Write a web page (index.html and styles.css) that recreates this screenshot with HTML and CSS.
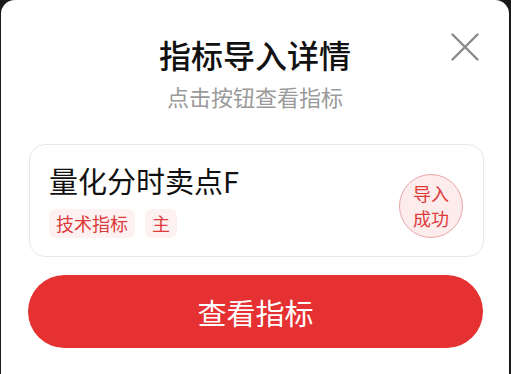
FILE: index.html
```html
<!DOCTYPE html>
<html lang="zh">
<head>
<meta charset="utf-8">
<link rel="stylesheet" href="styles.css">
</head>
<body>
<div class="modal">
  <svg class="close" width="28" height="28" viewBox="0 0 28 28">
    <path d="M1.5 1.5 L26.5 26.5 M26.5 1.5 L1.5 26.5" stroke="#8a8a8a" stroke-width="2.4" stroke-linecap="round" fill="none"/>
  </svg>
  <div class="header">
    <div class="title">指标导入详情</div>
    <div class="subtitle">点击按钮查看指标</div>
  </div>
  <div class="card">
    <div class="info">
      <div class="name">量化分时卖点F</div>
      <div class="tags">
        <span class="tag">技术指标</span>
        <span class="tag">主</span>
      </div>
    </div>
    <div class="badge">导入<br>成功</div>
  </div>
  <div class="btn">查看指标</div>
</div>
</body>
</html>
```

FILE: styles.css
```css
html, body {
  margin: 0;
  padding: 0;
}
body {
  background: #1a1a1a;
  font-family: "Noto Sans CJK SC", "Noto Sans", sans-serif;
  width: 511px;
  height: 374px;
  overflow: hidden;
}
.modal {
  position: relative;
  margin-left: 1px;
  width: 508px;
  min-height: 380px;
  background: #fff;
  border-radius: 14px 14px 0 0;
  padding-top: 34px;
  box-sizing: border-box;
}
.close {
  position: absolute;
  top: 33px;
  right: 30px;
}
.header {
  text-align: center;
}
.title {
  font-size: 32px;
  line-height: 40px;
  color: #111;
  font-weight: 500;
}
.subtitle {
  margin-top: 8px;
  font-size: 22px;
  line-height: 28px;
  color: #9a9a9a;
}
.card {
  margin: 34px 25px 0 28px;
  border: 1px solid #e8e8e8;
  border-radius: 16px;
  padding: 17px 19px 18px 19px;
  display: flex;
  justify-content: space-between;
}
.name {
  font-size: 29px;
  line-height: 37px;
  color: #111;
}
.tags {
  margin-top: 10px;
  display: flex;
  gap: 10px;
}
.tag {
  background: #fdf1f1;
  color: #dd3a3a;
  font-size: 18px;
  line-height: 29px;
  height: 29px;
  padding: 0 7px;
  border-radius: 7px;
}
.badge {
  align-self: flex-end;
  width: 64px;
  height: 64px;
  box-sizing: border-box;
  border: 1px solid #eaa5a5;
  border-radius: 50%;
  background: #fdecec;
  color: #dd3a3a;
  font-size: 18px;
  line-height: 25px;
  display: flex;
  align-items: center;
  justify-content: center;
  text-align: center;
  margin-right: 1px;
}
.btn {
  margin: 18px 26px 0 27px;
  height: 73px;
  border-radius: 37px;
  background: #e53131;
  color: #fff;
  font-size: 29px;
  display: flex;
  align-items: center;
  justify-content: center;
}
```
